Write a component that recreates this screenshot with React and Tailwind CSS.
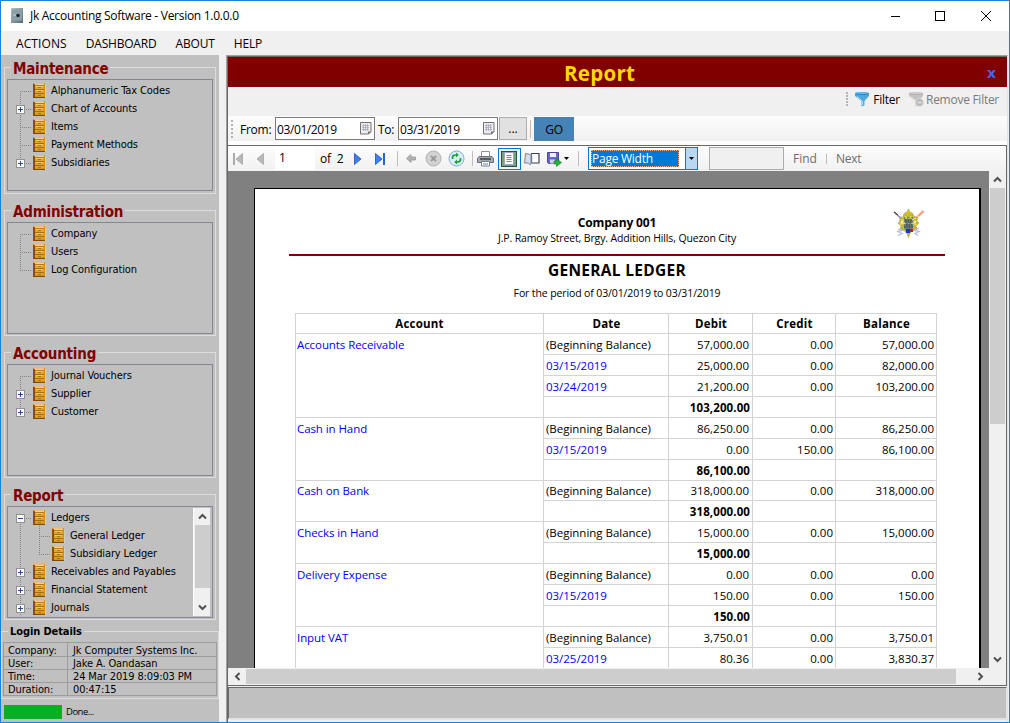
import React from "react";

const TAHOMA = "font-['DejaVu_Sans_Condensed','DejaVu_Sans',sans-serif] [font-stretch:condensed]";
const SEGOE = "font-['Open_Sans','Noto_Sans',sans-serif]";

const Cabinet = () => (
  <svg width="13" height="15" viewBox="0 0 13 15" className="shrink-0" shapeRendering="crispEdges">
    <rect x="0" y="0" width="12" height="14" fill="#cf9420" />
    <rect x="0" y="1" width="2" height="13" fill="#8a5208" />
    <rect x="1" y="0" width="10" height="1" fill="#f3b67c" />
    <rect x="2" y="1" width="9" height="1" fill="#f0cf98" />
    <rect x="2" y="2" width="9" height="1" fill="#b87a14" />
    <rect x="2" y="3" width="9" height="3" fill="#dca82c" />
    <rect x="2" y="6" width="9" height="1" fill="#a86c0c" />
    <rect x="2" y="7" width="9" height="3" fill="#dca82c" />
    <rect x="2" y="10" width="9" height="1" fill="#a86c0c" />
    <rect x="2" y="11" width="9" height="2" fill="#d8a228" />
    <rect x="3" y="3" width="7" height="1" fill="#ecca60" />
    <rect x="3" y="7" width="7" height="1" fill="#ecca60" />
    <rect x="5" y="4" width="3" height="1" fill="#a9741c" />
    <rect x="5" y="8" width="3" height="1" fill="#a9741c" />
    <rect x="5" y="12" width="3" height="1" fill="#a9741c" />
    <rect x="11" y="1" width="1" height="13" fill="#dd8c08" />
    <rect x="0" y="14" width="12" height="1" fill="#7b4a08" />
    <rect x="12" y="2" width="1" height="13" fill="#d8cdb8" />
  </svg>
);

const Branch = ({ sign, up, down }) => (
  <svg width="19" height="18" viewBox="0 0 19 18" className="shrink-0" shapeRendering="crispEdges">
    {up && <path d="M6.5 0V10" stroke="#808080" strokeDasharray="1 1" />}
    {down && <path d="M6.5 10V18" stroke="#808080" strokeDasharray="1 1" />}
    <path d="M6 10.5H18" stroke="#808080" strokeDasharray="1 1" />
    {sign && (
      <g>
        <rect x="2.5" y="6.5" width="8" height="8" fill="#fafafa" stroke="#919191" />
        <path d="M4 10.5H9" stroke="#2b4a94" />
        {sign === "+" && <path d="M6.5 8V13" stroke="#2b4a94" />}
      </g>
    )}
  </svg>
);

const TreeRow = ({ label, sign, up, down, nested, line }) => (
  <div className="flex h-[18px] items-center">
    {nested && (
      <svg width="19" height="18" className="shrink-0" shapeRendering="crispEdges">
        {line && <path d="M6.5 0V18" stroke="#808080" strokeDasharray="1 1" />}
      </svg>
    )}
    <Branch sign={sign} up={up} down={down} />
    <Cabinet />
    <span className="whitespace-nowrap pl-[5px] pt-[1px] leading-[17px]">{label}</span>
  </div>
);

const CHEVRONS = { up: "M1 6.5L4.5 3L8 6.5", down: "M1 2.5L4.5 6L8 2.5", left: "M6.5 1L3 4.5L6.5 8", right: "M2.5 1L6 4.5L2.5 8" };

const Chevron = ({ dir }) => (
  <svg width="9" height="9" viewBox="0 0 9 9">
    <path d={CHEVRONS[dir]} fill="none" stroke="#505050" strokeWidth="2" />
  </svg>
);

const Group = ({ title, rows, scroll }) => (
  <fieldset className="flex h-[126px] flex-col border border-[#dcdcdc] px-[2px] pb-px first:h-[127px]">
    <legend className="ml-[4px] h-0 px-[2px] text-[15px] font-bold text-[#800000]">
      <span className="-mt-[9px] block bg-[#c0c0c0] pt-px leading-[18px] tracking-[-0.22px]">{title}</span>
    </legend>
    <div className="mt-[11px] flex h-[112px] overflow-hidden border border-[#828790] pt-px">
      <div className="min-w-0 flex-1 pl-[6px] text-[11px] tracking-[-0.12px]">
        {rows.map((r) => (
          <TreeRow key={r.label} {...r} />
        ))}
      </div>
      {scroll && (
        <div className="mr-[2px] flex h-[108px] w-[17px] flex-col items-center border-l border-white bg-[#f0f0f0]">
          <div className="flex h-[17px] items-center"><Chevron dir="up" /></div>
          <div className="h-[63px] w-[15px] bg-[#cdcdcd]" />
          <div className="flex-1" />
          <div className="flex h-[17px] items-center"><Chevron dir="down" /></div>
        </div>
      )}
    </div>
  </fieldset>
);

const GROUPS = [
  { title: "Maintenance", rows: [
    { label: "Alphanumeric Tax Codes", down: true },
    { label: "Chart of Accounts", sign: "+", up: true, down: true },
    { label: "Items", up: true, down: true },
    { label: "Payment Methods", up: true, down: true },
    { label: "Subsidiaries", sign: "+", up: true },
  ] },
  { title: "Administration", rows: [
    { label: "Company", down: true },
    { label: "Users", up: true, down: true },
    { label: "Log Configuration", up: true },
  ] },
  { title: "Accounting", rows: [
    { label: "Journal Vouchers", down: true },
    { label: "Supplier", sign: "+", up: true, down: true },
    { label: "Customer", sign: "+", up: true },
  ] },
  { title: "Report", scroll: true, rows: [
    { label: "Ledgers", sign: "-", down: true },
    { label: "General Ledger", nested: true, line: true, up: true, down: true },
    { label: "Subsidiary Ledger", nested: true, line: true, up: true },
    { label: "Receivables and Payables", sign: "+", up: true, down: true },
    { label: "Financial Statement", sign: "+", up: true, down: true },
    { label: "Journals", sign: "+", up: true, down: true },
  ] },
];

const LOGIN = [
  ["Company:", "Jk Computer Systems Inc."],
  ["User:", "Jake A. Oandasan"],
  ["Time:", "24 Mar 2019 8:09:03 PM"],
  ["Duration:", "00:47:15"],
];

const LEDGER = [
  ["Accounts Receivable", [
    ["(Beginning Balance)", "57,000.00", "0.00", "57,000.00"],
    ["03/15/2019", "25,000.00", "0.00", "82,000.00"],
    ["03/24/2019", "21,200.00", "0.00", "103,200.00"],
    ["", "103,200.00", "", ""],
  ]],
  ["Cash in Hand", [
    ["(Beginning Balance)", "86,250.00", "0.00", "86,250.00"],
    ["03/15/2019", "0.00", "150.00", "86,100.00"],
    ["", "86,100.00", "", ""],
  ]],
  ["Cash on Bank", [
    ["(Beginning Balance)", "318,000.00", "0.00", "318,000.00"],
    ["", "318,000.00", "", ""],
  ]],
  ["Checks in Hand", [
    ["(Beginning Balance)", "15,000.00", "0.00", "15,000.00"],
    ["", "15,000.00", "", ""],
  ]],
  ["Delivery Expense", [
    ["(Beginning Balance)", "0.00", "0.00", "0.00"],
    ["03/15/2019", "150.00", "0.00", "150.00"],
    ["", "150.00", "", ""],
  ]],
  ["Input VAT", [
    ["(Beginning Balance)", "3,750.01", "0.00", "3,750.01"],
    ["03/25/2019", "80.36", "0.00", "3,830.37"],
    ["", "", "", ""],
  ]],
];

const COLS = "grid grid-cols-[125px_84px_83px_101px]";
const CELL = "border-b border-r border-[#d3d3d3] ";

const Ledger = () => (
  <div className="ml-[40px] mt-[12px] w-[642px] border-l border-t border-[#d3d3d3] text-[11.5px]">
    <div className="flex text-center font-bold tracking-[0.2px]">
      <div className="h-[20px] w-[248px] border-b border-r border-[#d3d3d3] leading-[19px]">Account</div>
      <div className={COLS}>
        {["Date", "Debit", "Credit", "Balance"].map((h) => (
          <div key={h} className="h-[20px] border-b border-r border-[#d3d3d3] pl-px leading-[19px]">{h}</div>
        ))}
      </div>
    </div>
    {LEDGER.map(([name, rows]) => {
      const tight = name === "Cash on Bank";
      return (
        <div key={name} className="flex">
          <div className={"w-[248px] border-b border-r border-[#d3d3d3] pl-px tracking-[-0.08px] text-[#0000ff] " + (tight ? "leading-[19px]" : "leading-[21px]")}>{name}</div>
          <div>
            {rows.map(([date, debit, credit, balance], i) => {
              const cell = CELL + (tight && i === 0 ? "h-[20px] leading-[19px] " : "h-[21px] leading-[21px] ");
              return (
                <div key={i} className={COLS}>
                  <div className={cell + "pl-[2px] tracking-[-0.02px] " + (i ? "text-[#0000ff]" : "")}>{date}</div>
                  <div className={cell + (date ? "pr-[3px] text-right" : "pr-[2px] text-right font-bold tracking-[0.1px]")}>{debit}</div>
                  <div className={cell + "pr-[2px] text-right"}>{credit}</div>
                  <div className={cell + "pr-[2px] text-right"}>{balance}</div>
                </div>
              );
            })}
          </div>
        </div>
      );
    })}
  </div>
);

const Crest = () => (
  <svg width="32" height="30" viewBox="0 0 32 30">
    <path d="M1 3L11 12" stroke="#8f80cc" strokeWidth="1.6" />
    <path d="M1 3L5 6" stroke="#4a2030" />
    <path d="M30.500 2L20 12" stroke="#ff9a70" strokeWidth="2.200" />
    <path d="M20 8l6-1" stroke="#ffc4a8" strokeWidth="1.500" />
    <path d="M15.500 0l1.500 3 3 1.500 1 3.500 3.500 0-.5 4 2 2-3 3 1 3-4 1.500-3 3-1.500 4-1.500-4-3-3-4-1.500 1-3-3-3 2-2-.5-4 3.500 0 1-3.500 3-1.500z" fill="#c4b83c" strokeDasharray="1 1" stroke="#a39c48" />
    <path d="M11 8h9v9c0 4-2 4-4.500 6C13 21 11 21 11 17z" fill="#6d7c74" />
    <path d="M8 10l3 2m-4 3l5-1m7-3l4-2m-4 5l5 2M12 7l2 3m4-3l-1 3" stroke="#ece04a" strokeWidth="1.300" />
    <path d="M12 11h7M12 13h7M13 16h6M11 18h9" stroke="#303c40" strokeDasharray="1.500 1" />
    <path d="M12 14.500h8M12 9.500h8" stroke="#a7b6ae" strokeDasharray="1 2" />
    <path d="M13 20h4v4h-4z" fill="#173bb5" />
    <path d="M17 20h3v3h-3z" fill="#bd1e28" />
    <path d="M5 20l4 1.500-4 1 4 2-4 2M26 19l-4 2.500 4 1-4 2 3 2" fill="none" stroke="#b4bbec" strokeWidth="1.300" />
    <path d="M13 4.500h5M14 2.500h3" stroke="#d9c800" strokeWidth="1.500" />
    <circle cx="9" cy="13" r="1.200" fill="#f4f0c8" />
    <circle cx="22" cy="13" r="1.200" fill="#f4f0c8" />
  </svg>
);

const Sep = ({ className = "h-[15px]" }) => <div className={"w-px shrink-0 bg-[#bdbdbd] " + className} />;

const Grip = ({ className = "" }) => (
  <svg width="3" height="18" viewBox="0 0 3 18" className={"shrink-0 " + className} shapeRendering="crispEdges">
    <path d="M1 0V18" stroke="#b4b4b4" strokeWidth="2" strokeDasharray="2 2" />
  </svg>
);

const DateBox = ({ value }) => (
  <div className="flex h-[23px] w-[100px] shrink-0 items-center border border-[#7a7a7a] bg-white pl-[1px]">
    <span className="flex-1 pt-[2px] text-[12px] tracking-[-0.4px]">{value}</span>
    <svg width="12" height="13" viewBox="0 0 12 13" className="mr-[2px]">
      <path d="M.5.500h10.500v9l-2.500 2.500H.5z" fill="#eeeef2" stroke="#78706f" />
      <path d="M2 3.500h7M2 5.500h7M2 7.500h7M3.500 2v7M5.500 2v7M7.500 2v7" stroke="#a2a6b4" strokeWidth=".7" />
      <path d="M11.500 9.500L8 12.500V9.500z" fill="#78706f" />
    </svg>
  </div>
);

const Funnel = ({ off }) => (
  <svg width="16" height="16" viewBox="0 0 16 16" className="shrink-0">
    <path d="M1 2.500C1 .5 15 .5 15 2.500V5L10.500 10v4.500l-3 1V10L1 5z" fill={off ? "#c3c3c3" : "#4fa9dc"} />
    <path d="M1 2.500C1 4.500 15 4.500 15 2.500" fill={off ? "#adadad" : "#2f83ba"} />
    <path d="M2 2C4 1 12 1 14 2l-3 1H5z" fill={off ? "#d0d0d0" : "#6fb8e2"} />
    <path d="M3 5.500l5.500 5V14" stroke={off ? "#dddddd" : "#b4e2f8"} fill="none" />
    {off && (
      <g>
        <circle cx="11.500" cy="11.500" r="4" fill="#b8b8b8" stroke="#ececec" strokeWidth=".6" />
        <path d="M9.500 11.500h4" stroke="#e8e8e8" strokeWidth="1.500" />
      </g>
    )}
  </svg>
);

const Tri = ({ flip, bar, on }) => (
  <svg width={bar ? 11 : 8} height="12" viewBox={bar ? "0 0 11 12" : "0 0 8 12"} className={"shrink-0 " + (flip ? "-scale-x-100" : "")}>
    <path d="M.5.5V11.5L7 6z" fill={on ? "#3f80ee" : "#b8b8b8"} stroke={on ? "#1a4fc0" : "#a6a6a6"} strokeWidth=".8" />
    {bar && <path d="M9 0v12" stroke={on ? "#2a62d2" : "#a9a9a9"} strokeWidth="2" />}
  </svg>
);

export default function App() {
  return (
    <div className={"flex h-[723px] w-[1010px] flex-col overflow-hidden border border-[#1883d7] bg-[#f0f0f0] text-black " + SEGOE}>
      <header className="flex h-[30px] shrink-0 items-center bg-white pl-[10px]">
        <svg width="12" height="15" viewBox="0 0 12 15" className="-mt-[2px]">
          <defs>
            <linearGradient id="safe" x1="0" y1="0" x2="1" y2="1">
              <stop stopColor="#b4c5cd" />
              <stop offset="1" stopColor="#536a75" />
            </linearGradient>
          </defs>
          <path d="M0 0h12v15H0z" fill="url(#safe)" />
          <path d="M1 1.500h10v11H1z" fill="#8c9fa8" />
          <circle cx="7" cy="7.500" r="1.800" fill="#17242b" />
          <path d="M2 7h3" stroke="#c5d3da" />
        </svg>
        <h1 className="ml-[7px] flex-1 text-[12px] tracking-[-0.28px]">Jk Accounting Software - Version 1.0.0.0</h1>
        <svg width="100" height="12" viewBox="0 0 100 12" className="-mt-px mr-[18px]" fill="none" stroke="#000" shapeRendering="crispEdges">
          <path d="M-1 6.5h10" />
          <rect x="44.5" y="1.5" width="9" height="9" />
          <path d="M90 1l10 10M100 1L90 11" shapeRendering="auto" />
        </svg>
      </header>
      <nav className="flex h-[24px] shrink-0 items-center gap-[19px] pl-[15px] pt-[2px] text-[12px]">
        <span className="tracking-[0.1px]">ACTIONS</span>
        <span className="tracking-[-0.2px]">DASHBOARD</span>
        <span className="tracking-[-0.15px]">ABOUT</span>
        <span className="tracking-[-0.2px]">HELP</span>
      </nav>
      <div className="flex min-h-0 flex-1">
        <aside className={"flex w-[218px] shrink-0 flex-col bg-[#c0c0c0] " + TAHOMA}>
          <div className="flex flex-col gap-[16px] px-[3px] pt-[12px]">
            {GROUPS.map((g) => <Group key={g.title} {...g} />)}
          </div>
          <fieldset className="mt-[11px] h-[68px] border border-[#dcdcdc] px-[1px]">
            <legend className="ml-[5px] h-0 px-[2px] text-[11px] font-bold">
              <span className="-mt-[8px] block bg-[#c0c0c0] leading-[16px] tracking-[-0.1px]">Login Details</span>
            </legend>
            <div className="mt-[10px] border border-[#9c9c9c] text-[11px] tracking-[-0.12px]">
              {LOGIN.map(([k, v], i) => (
                <div key={k} className={"flex h-[13px] " + (i ? "border-t border-[#9c9c9c] leading-[14px]" : "leading-[15px]")}>
                  <span className="w-[64px] border-r border-[#9c9c9c] pl-[4px]">{k}</span>
                  <span className="whitespace-nowrap pl-[5px]">{v}</span>
                </div>
              ))}
            </div>
          </fieldset>
          <div className="mt-[5px] flex items-center pl-[3px]">
            <div className="h-[14px] w-[58px] bg-[#06b025]" />
            <span className="ml-[4px] pt-px font-['Open_Sans','Noto_Sans',sans-serif] text-[9.5px] leading-[14px] tracking-[-0.5px] [font-stretch:normal]">Done...</span>
          </div>
        </aside>
        <main className="ml-[7px] mr-px flex min-w-0 flex-1 flex-col border-l border-r border-t border-[#a0a0a0] border-r-[#e3e3e3]">
          <div className="flex min-h-0 flex-1 flex-col border-l border-t border-[#696969]">
            <div className="flex h-[30px] shrink-0 items-center bg-[#800000]">
              <h2 className="flex-1 pr-[16px] pt-[2px] text-center text-[20.5px] font-bold leading-[28px] tracking-[0.3px] text-[#ffd700]">Report</h2>
              <span className="mr-[11px] text-[15px] font-bold leading-[26px] text-[#4169e1]">x</span>
            </div>
            <div className="flex h-[29px] shrink-0 items-center justify-end pb-[5px] pr-[8px] text-[12px]">
              <Grip className="mr-[5px] h-[14px]" />
              <Funnel />
              <span className="ml-[3px] mr-[8px] pt-px tracking-[-0.25px]">Filter</span>
              <Funnel off />
              <span className="ml-[2px] pt-px tracking-[-0.27px] text-[#7b7b7b]">Remove Filter</span>
            </div>
            <div className="flex h-[25px] shrink-0 items-center bg-gradient-to-b from-[#fdfdfd] to-[#f1f1f1] pl-[3px] text-[12px]">
              <Grip className="mr-[6px]" />
              <span className="w-[35px] whitespace-nowrap pt-[2px] tracking-[-0.25px]">From:</span>
              <DateBox value="03/01/2019" />
              <span className="ml-[3px] w-[20px] whitespace-nowrap pt-[2px] tracking-[-0.3px]">To:</span>
              <DateBox value="03/31/2019" />
              <span className="ml-px h-[23px] w-[28px] border border-[#adadad] bg-[#e1e1e1] text-center leading-[21px]">...</span>
              <Sep className="mx-[3px] h-[18px]" />
              <span className="h-[24px] w-[40px] bg-[#4682b4] text-center leading-[25px] tracking-[-0.4px]">GO</span>
            </div>
            <div className="h-[4px] shrink-0 bg-white" />
            <div className="flex min-h-0 flex-1 flex-col border-r border-t border-[#696969]">
              <div className="flex h-[25px] shrink-0 items-center bg-gradient-to-b from-[#fdfdfd] to-[#f1f1f1] pl-[4px] text-[12px]">
                <Tri flip bar />
                <span className="ml-[13px] flex shrink-0"><Tri flip /></span>
                <span className="ml-[11px] h-[23px] w-[40px] shrink-0 bg-white pl-[4px] leading-[22px]">1</span>
                <span className="ml-[5px] w-[34px] shrink-0 whitespace-pre tracking-[-0.2px]">of  2</span>
                <Tri on />
                <span className="ml-[13px] flex shrink-0"><Tri on bar /></span>
                <Sep className="ml-[11px] h-[15px]" />
                <svg className="ml-[8px] shrink-0" width="10" height="9" viewBox="0 0 10 9"><path d="M.5 4.500L5 .5v2.500h4.500v3H5V8.500z" fill="#b4b4b4" stroke="#969696" strokeWidth=".8" /></svg>
                <svg className="ml-[9px] shrink-0" width="17" height="17" viewBox="0 0 17 17"><circle cx="8.500" cy="8.500" r="7.500" fill="#d2d2d2" stroke="#b2b2b2" /><path d="M6 6l5 5m0-5l-5 5" stroke="#999" strokeWidth="1.800" /></svg>
                <svg className="ml-[6px] shrink-0" width="17" height="17" viewBox="0 0 17 17"><circle cx="8.500" cy="8.500" r="7.500" fill="#d9edfc" stroke="#7fabd6" /><path d="M4.500 9V7.500c0-2 1-2.500 3.500-2.500M12.500 8v1.500c0 2-1 2.500-3.500 2.500" fill="none" stroke="#22a233" strokeWidth="1.700" /><path d="M8 2.500v5L10.800 5zM9 9.500v5L6.200 12z" fill="#22a233" /></svg>
                <Sep className="ml-[7px] h-[15px]" />
                <svg className="ml-[4px] shrink-0" width="17" height="16" viewBox="0 0 17 16"><path d="M4.500.5h8v5h-8z" fill="#fff" stroke="#8a92a2" /><path d="M2 5.500h13l1.500 2v4H.5v-4z" fill="#a3a7b0" stroke="#6a6e76" /><path d="M3 8h11" stroke="#3c3f45" strokeWidth="1.500" /><path d="M4.500 10.500h8v4.500h-8z" fill="#fff" stroke="#767f8e" /><path d="M6 13h5" stroke="#4c84c8" /></svg>
                <span className="ml-[4px] flex h-[22px] w-[23px] shrink-0 items-center justify-center border border-[#0078d7] bg-[#eef6fc]">
                  <svg width="17" height="16" viewBox="0 0 17 16"><rect x=".5" y=".5" width="15" height="15" fill="#6fa67f" stroke="#2a4f3c" /><path d="M3.500 1.500h9v12h-9z" fill="#fff" stroke="#9aa9c0" /><path d="M5.500 4.500h5M5.500 6.500h5M5.500 8.500h5M5.500 10.500h5" stroke="#6685b4" /></svg>
                </span>
                <svg className="ml-[3px] shrink-0" width="16" height="14" viewBox="0 0 16 14"><path d="M1.500 1.500l5 1v10.500l-2-2H.5z" fill="#d3deee" stroke="#7c8492" /><path d="M7.500 1.500H15v9.500H7.500z" fill="#fff" stroke="#3e434c" strokeWidth="1.200" /><path d="M6 2.500l1.500-1V11L6 13" fill="#a4aebf" /></svg>
                <svg className="ml-[7px] shrink-0" width="15" height="16" viewBox="0 0 15 16"><path d="M.5 1.500h11v11h-10l-1-1z" fill="#6c64cc" stroke="#4a449c" /><path d="M3 2h6v4H3z" fill="#eef0fb" /><path d="M3 8.500h5v4H3z" fill="#d0d2e6" /><path d="M9.500 7.500v2.500H7v3h2.500v2.500L14.500 11.500z" fill="#22b534" stroke="#168024" strokeWidth=".6" /></svg>
                <svg className="ml-[2px] shrink-0" width="5" height="3"><path d="M0 0h5L2.500 3z" /></svg>
                <Sep className="ml-[9px] h-[15px]" />
                <div className="ml-[9px] flex h-[23px] w-[110px] shrink-0 items-stretch border border-[#0078d7] bg-white">
                  <span className="my-[2px] ml-[2px] flex w-[88px] items-center border border-dotted border-[#ffb070] bg-[#0078d7] leading-[16px] tracking-[-0.25px] text-white">Page Width</span>
                  <span className="ml-auto flex w-[12px] items-center justify-center border-l border-[#0078d7] bg-[#b8d8f2]"><svg width="5" height="3"><path d="M0 0h5L2.500 3z" /></svg></span>
                </div>
                <div className="ml-[11px] h-[23px] w-[75px] shrink-0 border border-[#acacac] bg-[#f0f0f0]" />
                <span className="ml-[9px] w-[24px] text-[#6d6d6d]">Find</span>
                <Sep className="ml-[9px] h-[10px]" />
                <span className="ml-[9px] tracking-[-0.3px] text-[#6d6d6d]">Next</span>
              </div>
              <div className="flex min-h-0 flex-1">
                <div className="min-w-0 flex-1 overflow-hidden bg-[#808080] pl-[26px] pr-[8px] pt-[17px]">
                  <section className="h-[600px] border-l border-r-2 border-t border-black bg-white">
                    <div className="relative h-[65px] w-[724px] pt-[25px] text-center">
                      <div className="text-[12px] font-bold leading-[18px] tracking-[-0.15px]">Company 001</div>
                      <div className="text-[10.5px] leading-[13px] tracking-[-0.14px]">J.P. Ramoy Street, Brgy. Addition Hills, Quezon City</div>
                      <div className="absolute left-[638px] top-[20px]"><Crest /></div>
                    </div>
                    <div className="ml-[34px] h-[2px] w-[656px] bg-[#800000]" />
                    <div className="w-[724px] pt-[4px] text-center">
                      <div className="text-[15.5px] font-bold leading-[20px] tracking-[0.3px]">GENERAL LEDGER</div>
                      <div className="pt-[5px] text-[10.5px] leading-[16px] tracking-[-0.12px]">For the period of 03/01/2019 to 03/31/2019</div>
                    </div>
                    <Ledger />
                  </section>
                </div>
                <div className="flex w-[17px] shrink-0 flex-col items-center bg-[#f0f0f0]">
                  <div className="flex h-[17px] items-center"><Chevron dir="up" /></div>
                  <div className="h-[236px] w-[15px] bg-[#cdcdcd]" />
                  <div className="flex-1" />
                  <div className="flex h-[17px] items-center"><Chevron dir="down" /></div>
                </div>
              </div>
              <div className="flex h-[17px] shrink-0 items-center bg-[#f0f0f0]">
                <div className="flex w-[18px] justify-center"><Chevron dir="left" /></div>
                <div className="h-[15px] w-[710px] bg-[#cdcdcd]" />
                <div className="ml-[16px] flex w-[17px] justify-center"><Chevron dir="right" /></div>
              </div>
            </div>
            <div className="mb-[2px] h-[35px] shrink-0 border-b border-t border-[#696969] border-b-[#e3e3e3] pt-px">
              <div className="h-[32px] border border-[#696969] border-b-[#e3e3e3] border-r-[#e3e3e3] bg-[#c0c0c0]" />
            </div>
          </div>
        </main>
      </div>
    </div>
  );
}
